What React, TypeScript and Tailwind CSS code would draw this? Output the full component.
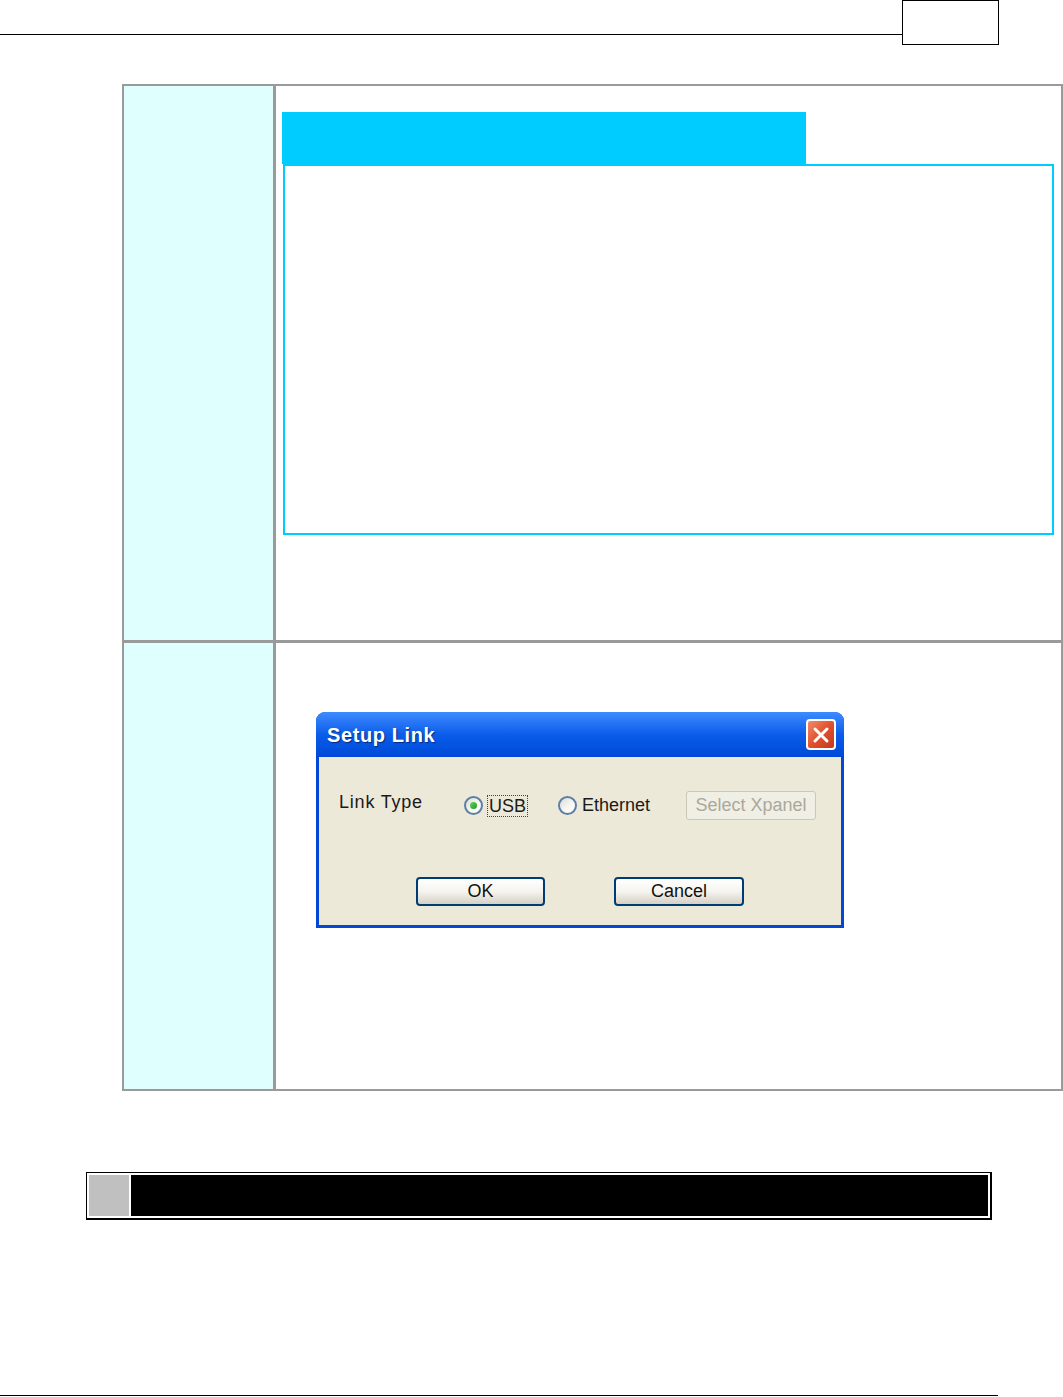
import React from "react";

const Radio: React.FC<{ checked?: boolean }> = ({ checked }) => (
  <span className="flex h-[19px] w-[19px] items-center justify-center rounded-full border-[2px] border-[#5d7fa6] bg-gradient-to-br from-[#dcdcd4] via-[#f4f4f0] to-white">
    {checked && <span className="h-[7px] w-[7px] rounded-full bg-gradient-to-br from-[#5ed35e] to-[#1f9a1f]" />}
  </span>
);

const XpButton: React.FC<{ label: string; className?: string }> = ({ label, className }) => (
  <div
    className={
      "flex h-[29px] w-[129px] items-center justify-center rounded-[4px] border-[2px] border-[#003c74] bg-gradient-to-b from-white via-[#f5f4ef] to-[#d6d0c5] text-[18px] text-[#111] " +
      (className ?? "")
    }
  >
    {label}
  </div>
);

const SetupLink: React.FC = () => (
  <div className="ml-[40px] mt-[69px] flex h-[216px] w-[528px] flex-col rounded-t-[9px] bg-[#0347d6]">
    <div className="flex h-[45px] items-center justify-between rounded-t-[9px] bg-gradient-to-b from-[#3d8bff] via-[#0a5ce9] to-[#0049d8] pl-[11px] pr-[8px]">
      <span className="text-[20px] font-bold tracking-[0.6px] text-white [text-shadow:1px_1px_1px_#0a2a80]">Setup Link</span>
      <span className="flex h-[31px] w-[30px] items-center justify-center rounded-[4px] border-[2px] border-white bg-gradient-to-br from-[#f08a6a] via-[#e2502c] to-[#c2391c]">
        <svg width="18" height="18" viewBox="0 0 18 18">
          <path d="M3 3 L15 15 M15 3 L3 15" stroke="white" strokeWidth="3" strokeLinecap="round" />
        </svg>
      </span>
    </div>
    <div className="mx-[3px] mb-[3px] flex flex-1 flex-col bg-[#ece9d8] pl-[20px] pt-[34px]">
      <div className="flex h-[29px] items-center text-[18px] text-[#1a1a1a]">
        <span className="w-[125px] -translate-y-[3px] tracking-[0.8px]">Link Type</span>
        <Radio checked />
        <span className="ml-[4px] border border-dotted border-[#444] px-[1px] leading-[20px]">USB</span>
        <span className="ml-[30px]">
          <Radio />
        </span>
        <span className="ml-[5px]">Ethernet</span>
        <div className="ml-[36px] flex h-[29px] w-[130px] items-center justify-center rounded-[3px] border border-[#cac8bb] bg-[#f0efe6] text-[#aca899]">
          Select Xpanel
        </div>
      </div>
      <div className="mt-[57px] flex pl-[77px]">
        <XpButton label="OK" />
        <XpButton label="Cancel" className="ml-[69px] w-[130px]" />
      </div>
    </div>
  </div>
);

export default function App() {
  return (
    <div className="h-[1397px] w-[1063px] bg-white font-['Liberation_Sans',Arial,sans-serif]">
      <div className="flex items-start">
        <div className="h-[35px] w-[902px] border-b border-black" />
        <div className="h-[45px] w-[97px] border border-black" />
      </div>

      <div className="ml-[122px] mt-[39px] flex w-[941px] flex-col border-[2px] border-[#9a9a9a]">
        <div className="flex h-[557px] border-b-[3px] border-[#9a9a9a]">
          <div className="w-[152px] border-r-[3px] border-[#9a9a9a] bg-[#dfffff]" />
          <div className="flex flex-1 flex-col pt-[26px]">
            <div className="ml-[6px] h-[52px] w-[524px] bg-[#00ccff]" />
            <div className="ml-[7px] h-[371px] w-[771px] border-[2px] border-[#00ccff]" />
          </div>
        </div>
        <div className="flex h-[446px]">
          <div className="w-[152px] border-r-[3px] border-[#9a9a9a] bg-[#dfffff]" />
          <div className="flex-1">
            <SetupLink />
          </div>
        </div>
      </div>

      <div className="ml-[86px] mt-[81px] flex h-[48px] w-[906px] gap-[2px] border border-b-[2px] border-r-[2px] border-black bg-white p-[2px]">
        <div className="w-[40px] bg-[#c0c0c0]" />
        <div className="flex-1 bg-black" />
      </div>

      <div className="mt-[175px] h-px w-[998px] bg-black" />
    </div>
  );
}
